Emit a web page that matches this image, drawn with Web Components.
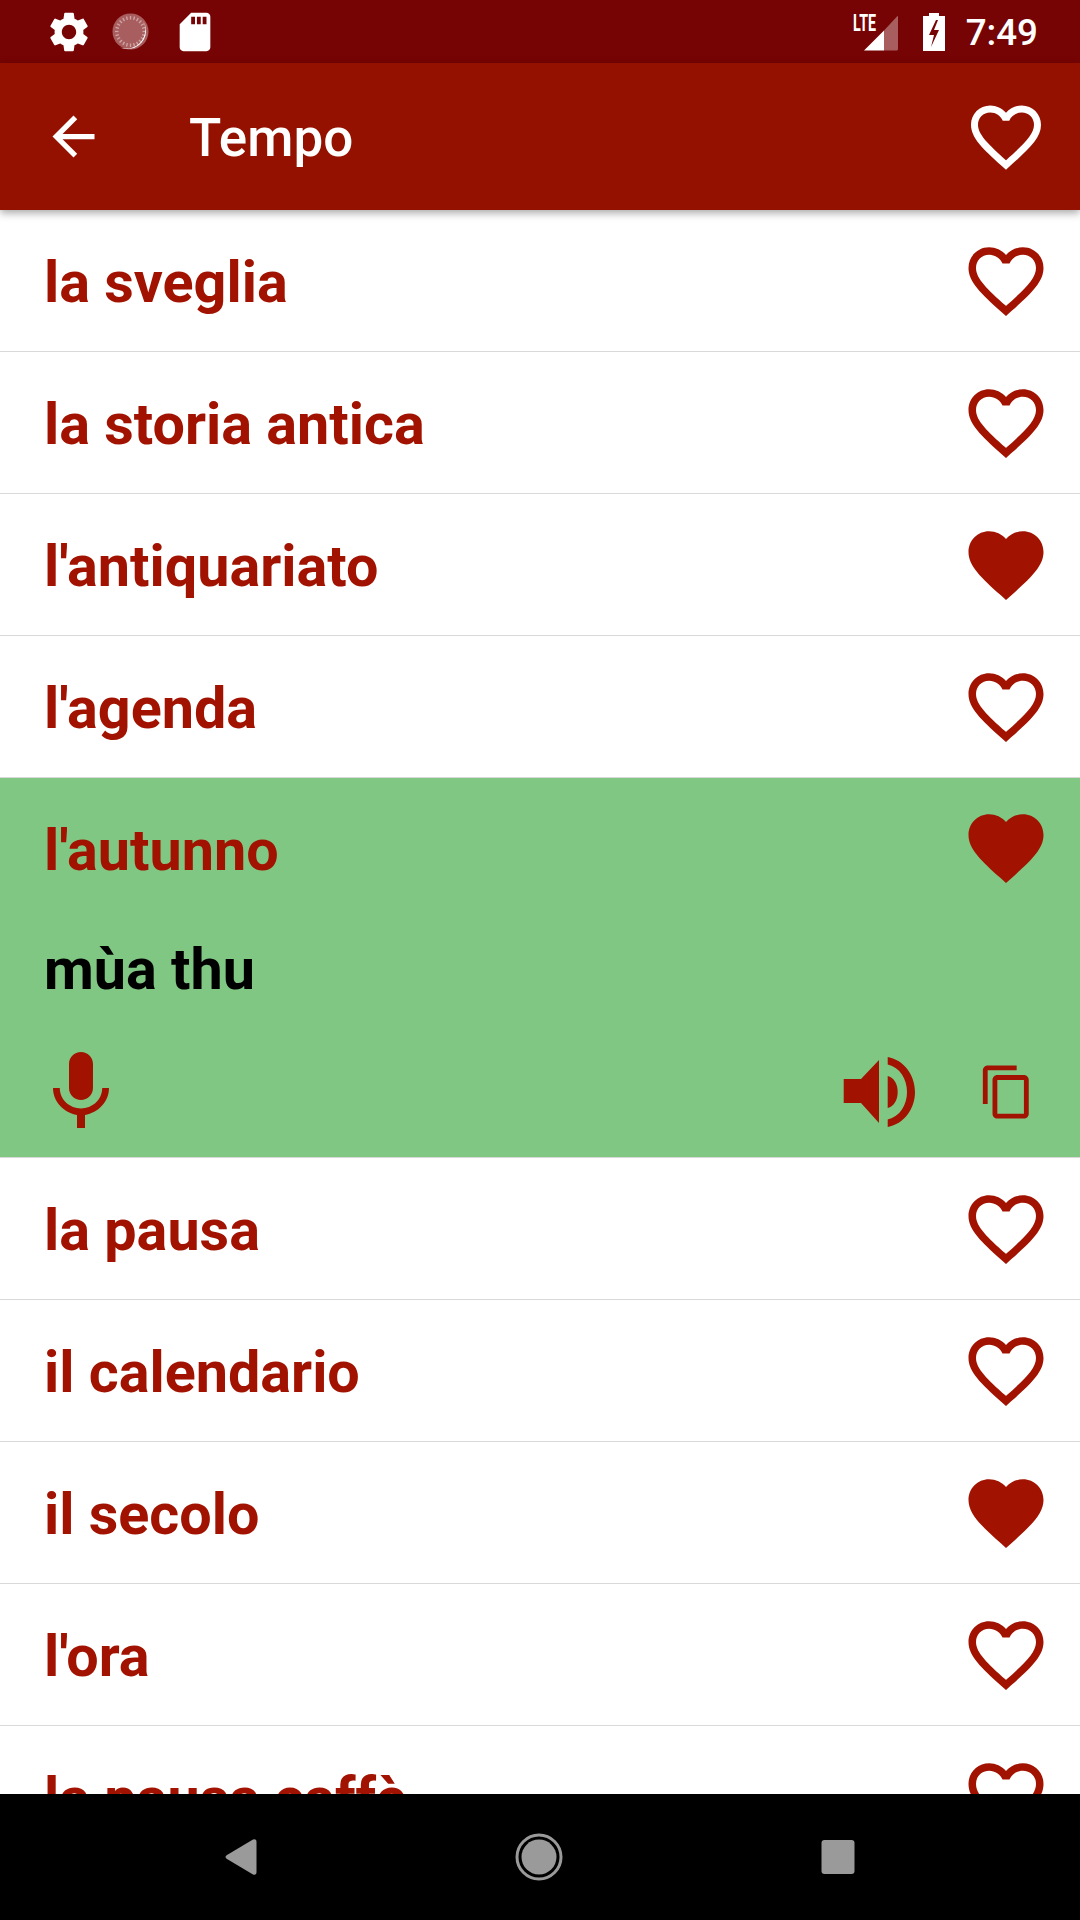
<!DOCTYPE html>
<html lang="it"><head><meta charset="utf-8"><title>Tempo</title>
<style>
html,body{margin:0;padding:0;background:#fff}
body{font-family:Roboto,"Liberation Sans",sans-serif}
</style></head><body>
<phone-screen>
  <status-bar slot="top"></status-bar>
  <app-bar slot="top">Tempo</app-bar>
  <word-row>la sveglia</word-row>
  <word-row>la storia antica</word-row>
  <word-row fav>l'antiquariato</word-row>
  <word-row>l'agenda</word-row>
  <word-card word="l'autunno" fav>mùa thu</word-card>
  <word-row>la pausa</word-row>
  <word-row>il calendario</word-row>
  <word-row fav>il secolo</word-row>
  <word-row>l'ora</word-row>
  <word-row>la pausa caffè</word-row>
  <nav-bar slot="bottom"></nav-bar>
</phone-screen>
<script>
const P={
 border:"M16.5 3c-1.74 0-3.41.81-4.5 2.09C10.91 3.81 9.24 3 7.5 3 4.42 3 2 5.42 2 8.5c0 3.78 3.4 6.86 8.55 11.54L12 21.35l1.45-1.32C18.6 15.36 22 12.28 22 8.5 22 5.42 19.58 3 16.5 3zm-4.4 15.55l-.1.1-.1-.1C7.14 14.24 4 11.39 4 8.5 4 6.5 5.5 5 7.5 5c1.54 0 3.04.99 3.57 2.36h1.87C13.46 5.99 14.96 5 16.5 5c2 0 3.5 1.5 3.5 3.5 0 2.89-3.14 5.74-7.9 10.05z",
 full:"M12 21.35l-1.45-1.32C5.4 15.36 2 12.28 2 8.5 2 5.42 4.42 3 7.5 3c1.74 0 3.41.81 4.5 2.09C13.09 3.81 14.76 3 16.5 3 19.58 3 22 5.42 22 8.5c0 3.78-3.4 6.86-8.55 11.54L12 21.35z",
 back:"M20 11H7.83l5.59-5.59L12 4l-8 8 8 8 1.41-1.41L7.83 13H20v-2z",
 gear:"M19.14,12.94c0.04-0.3,0.06-0.61,0.06-0.94c0-0.32-0.02-0.64-0.07-0.94l2.03-1.58c0.18-0.14,0.23-0.41,0.12-0.61l-1.92-3.32c-0.12-0.22-0.37-0.29-0.59-0.22l-2.39,0.96c-0.5-0.38-1.03-0.7-1.62-0.94L14.4,2.81c-0.04-0.24-0.24-0.41-0.48-0.41h-3.84c-0.24,0-0.43,0.17-0.47,0.41L9.25,5.35C8.66,5.59,8.12,5.92,7.63,6.29L5.24,5.33c-0.22-0.08-0.47,0-0.59,0.22L2.74,8.87C2.62,9.08,2.66,9.34,2.86,9.48l2.03,1.58C4.84,11.36,4.8,11.69,4.8,12s0.02,0.64,0.07,0.94l-2.03,1.58c-0.18,0.14-0.23,0.41-0.12,0.61l1.92,3.32c0.12,0.22,0.37,0.29,0.59,0.22l2.39-0.96c0.5,0.38,1.03,0.7,1.62,0.94l0.36,2.54c0.05,0.24,0.24,0.41,0.48,0.41h3.84c0.24,0,0.44-0.17,0.47-0.41l0.36-2.54c0.59-0.24,1.13-0.56,1.62-0.94l2.39,0.96c0.22,0.08,0.47,0,0.59-0.22l1.92-3.32c0.12-0.22,0.07-0.47-0.12-0.61L19.14,12.94z M12,15.6c-1.98,0-3.6-1.62-3.6-3.6s1.62-3.6,3.6-3.6s3.6,1.62,3.6,3.6S13.98,15.6,12,15.6z",
 sd:"M18 2h-8L4.02 8 4 20c0 1.1.9 2 2 2h12c1.1 0 2-.9 2-2V4c0-1.1-.9-2-2-2zm-6 6h-2V4h2v4zm3 0h-2V4h2v4zm3 0h-2V4h2v4z",
 mic:"M12 14c1.66 0 2.99-1.34 2.99-3L15 5c0-1.66-1.34-3-3-3S9 3.34 9 5v6c0 1.66 1.34 3 3 3zm5.3-3c0 3-2.54 5.1-5.3 5.1S6.7 14 6.7 11H5c0 3.41 2.72 6.23 6 6.72V21h2v-3.28c3.28-.48 6-3.3 6-6.72h-1.7z",
 copy:"M16 1H4c-1.1 0-2 .9-2 2v14h2V3h12V1zm3 4H8c-1.1 0-2 .9-2 2v14c0 1.1.9 2 2 2h11c1.1 0 2-.9 2-2V7c0-1.1-.9-2-2-2zm0 16H8V7h11v14z"
};
const RED="#a11300";
const svg=(name,size,fill)=>`<svg width="${size}" height="${size}" viewBox="0 0 24 24" fill="${fill}" style="display:block;flex:none"><path d="${P[name]}"/></svg>`;
const define=(tag,render)=>customElements.define(tag,class extends HTMLElement{
  connectedCallback(){ if(!this.shadowRoot){this.attachShadow({mode:"open"}).innerHTML=render(this);} }
});
define("phone-screen",()=>`<style>
:host{display:flex;flex-direction:column;width:1080px;height:1920px;overflow:hidden;background:#fff}
.list{flex:1;min-height:0;overflow:hidden}
</style><slot name="top"></slot><div class="list"><slot></slot></div><slot name="bottom"></slot>`);
define("status-bar",()=>{
 const ticks=Array.from({length:24},(_,i)=>`<line x1="20" y1="4.5" x2="20" y2="8" transform="rotate(${i*15} 20 20)"/>`).join("");
 return `<style>
:host{display:flex;align-items:center;height:63px;background:#770404;color:#fff;padding:0 42px 0 44.500px;box-sizing:border-box;font:500 36.75px Roboto,sans-serif}
.l{display:flex;align-items:center;gap:18.500px}
.r{margin-left:auto;display:flex;align-items:center}
.sig{position:relative;width:46px;height:38px;margin-right:24px}
.sig svg{position:absolute;left:0;top:0}
.lte{position:absolute;left:0;top:0;font:700 23px/22px Roboto,sans-serif;transform:scaleX(.62);transform-origin:0 0;letter-spacing:0}
.time{margin-left:20.500px;line-height:63px;padding-top:2px}
</style>
<div class="l">${svg("gear",48,"#fff")}
<svg width="40" height="40" viewBox="0 0 40 40" style="display:block"><circle cx="19.5" cy="19.5" r="18" fill="#fff" fill-opacity=".36"/><path d="M32 8.5A18.5 18.5 0 0 1 9 35.5 19 19 0 0 0 32 8.5z" fill="#fff"/><g stroke="#fff" stroke-opacity=".45" stroke-width="1.3" transform="translate(-.5 -.5)">${ticks}</g></svg>
<div style="margin-left:2px">${svg("sd",46,"#fff")}</div></div>
<div class="r"><div class="sig"><span class="lte">LTE</span><svg width="46" height="38" viewBox="0 0 46 38"><path d="M11 37.5 31 17.5V37.5z" fill="#fff"/><path d="M31 17.5 44 3.5Q45 2.5 45 4V36Q45 37.5 43.5 37.5H31z" fill="#fff" fill-opacity=".36"/></svg></div>
<svg width="22" height="38" viewBox="0 0 22 38" style="display:block"><path fill-rule="evenodd" d="M6 0h10v3h6v35H0V3h6zM13 7 6 22h5l-3 12 8-17h-5l4-10z" fill="#fff"/></svg>
<span class="time">7:49</span></div>`});
define("app-bar",()=>`<style>
:host{display:flex;align-items:center;position:relative;z-index:1;height:147px;background:#941100;color:#fff;box-shadow:0 3px 8px rgba(0,0,0,.35);padding:0 32.500px 0 42px;font:500 53px Roboto,sans-serif}
.t{margin-left:84px;flex:1;padding-top:3px}
</style>${svg("back",63,"#fff")}<div class="t"><slot></slot></div>${svg("border",84,"#fff")}`);
const ROW=`display:flex;align-items:center;justify-content:space-between;padding:0 29px 0 44px`;
define("word-row",h=>`<style>
:host{${ROW};height:142px;box-sizing:border-box;border-bottom:1px solid #d9d9d9;color:${RED};font:700 57.5px Roboto,sans-serif}
.w{padding-top:3px}
</style><div class="w"><slot></slot></div>${svg(h.hasAttribute("fav")?"full":"border",90,RED)}`);
define("word-card",h=>`<style>
:host{display:flex;flex-direction:column;height:380px;box-sizing:border-box;border-bottom:1px solid #d9d9d9;background:#81c784;background-clip:padding-box;color:${RED};font:700 57.5px Roboto,sans-serif}
.h{${ROW};height:140px;flex:none}
.w{padding-top:4px}
.tr{height:102px;flex:none;display:flex;align-items:center;padding-left:44px;color:#000}
.a{display:flex;align-items:center;padding:24px 44px 0 33px}
.sp{flex:1}
</style><div class="h"><div class="w">${h.getAttribute("word")}</div>${svg(h.hasAttribute("fav")?"full":"border",90,RED)}</div>
<div class="tr"><slot></slot></div>
<div class="a">${svg("mic",96,RED)}<div class="sp"></div>
<svg width="96" height="96" viewBox="0 0 96 96" fill="${RED}" style="display:block"><path d="M12.7 35H30L48 16v63L30 59H12.7z"/><path d="M56.7 32c6 1.500 10 8 10 16s-4 14.500-10 16z"/><path d="M56.700 13C73 16 84 31 84 48S73 80 56.700 83v-7.500C69 72.500 76 61 76 48S69 23.500 56.700 20.500z"/></svg>
<div style="width:51px"></div>${svg("copy",58,RED)}</div>`);
define("nav-bar",()=>`<style>
:host{display:flex;align-items:center;justify-content:center;gap:219px;height:126px;padding-right:2px;background:#000}
svg{display:block;flex:none}
</style>
<svg width="80" height="80" viewBox="0 0 80 80" fill="#9a9a9a"><path d="M25.500 40Q25.500 39 27 38L53 22.500Q56.500 21.500 56.500 25V55Q56.500 58.500 53 57.500L27 42Q25.500 41 25.500 40z"/></svg>
<svg width="80" height="80" viewBox="0 0 80 80"><circle cx="40" cy="40" r="22" fill="none" stroke="#9a9a9a" stroke-width="3"/><circle cx="40" cy="40" r="17.500" fill="#9a9a9a"/></svg>
<svg width="80" height="80" viewBox="0 0 80 80"><rect x="23.500" y="23" width="33" height="34" rx="3" fill="#9a9a9a"/></svg>`);
</script>
</body></html>
